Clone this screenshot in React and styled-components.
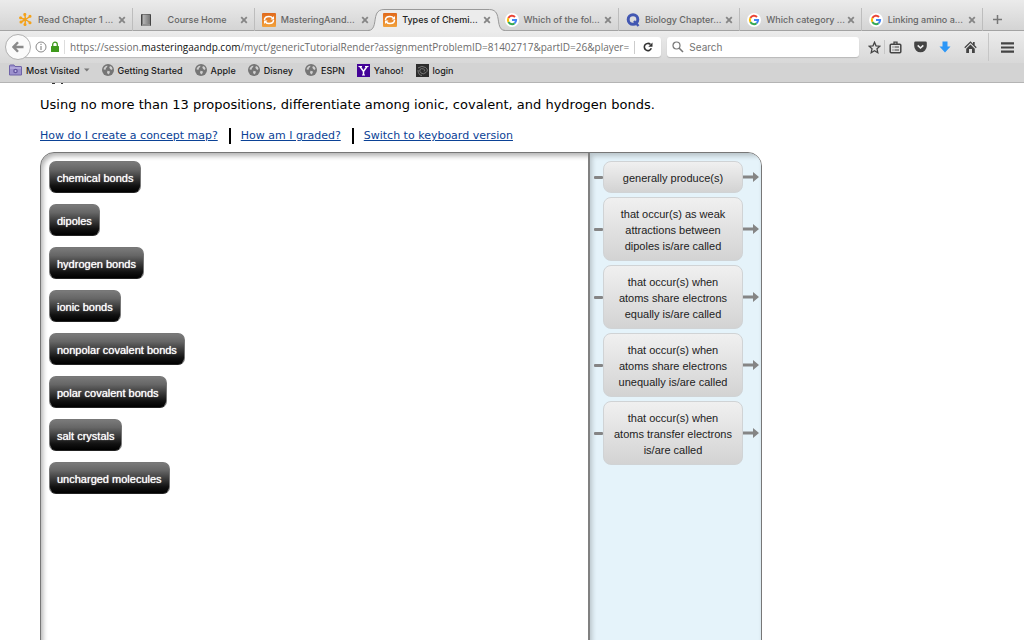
import styled, { createGlobalStyle, css } from 'styled-components';

const GlobalStyle = createGlobalStyle`
  * {
    box-sizing: border-box;
  }
  body {
    margin: 0;
    background: #fff;
    color: #000;
    font-family: 'DejaVu Sans', sans-serif;
  }
  button, input {
    font: inherit;
    color: inherit;
    border: 0;
    padding: 0;
    background: none;
  }
  svg {
    display: block;
    flex: none;
  }
`;

const Window = styled.div`
  display: flex;
  flex-direction: column;
  height: 100vh;
  overflow: hidden;
`;

const Chrome = styled.header`
  flex: none;
  font-family: Inter, sans-serif;
  font-size: 9px;
  font-weight: 500;
  border-bottom: 1px solid #b4b4b4;
`;

const TabStrip = styled.nav`
  display: flex;
  height: 31px;
  padding: 8px 0 0 12px;
  background: linear-gradient(#ebebeb, #d4d4d4);
  border-bottom: 1px solid #a3a3a3;
`;

const TabItem = styled.div`
  position: relative;
  display: flex;
  flex: 1;
  align-items: center;
  gap: 5px;
  min-width: 0;
  height: 23px;
  padding: 0 7px;
  color: #666;

  ${(p) =>
    p.$divider &&
    css`
      box-shadow: inset -1px 0 #bdbdbd;
    `}
  ${(p) =>
    p.$active &&
    css`
      color: #222;
      z-index: 1;
    `}
`;

const TabShape = styled.svg`
  position: absolute;
  left: -8px;
  top: 0;
  width: calc(100% + 16px);
  height: 24px;
`;

const TabLabel = styled.button`
  position: relative;
  flex: 1;
  min-width: 0;
  white-space: nowrap;
  text-align: ${(p) => (p.$centered ? 'center' : 'left')};
`;

const TabIcon = styled.span`
  position: relative;
  width: 14px;
`;

const CloseButton = styled.button`
  position: relative;
  width: 8px;
  height: 8px;
`;

const NewTab = styled.button`
  display: grid;
  place-items: center;
  width: 41px;
  padding-right: 12px;
  height: 23px;
`;

const Toolbar = styled.div`
  display: flex;
  align-items: center;
  height: 32px;
  padding: 0 10px 0 5px;
  background: linear-gradient(#ececec, #d8d8d8);
`;

const BackButton = styled.button`
  position: relative;
  z-index: 1;
  display: grid;
  place-items: center;
  width: 26px;
  height: 26px;
  margin-right: -6px;
  border: 1px solid #b0b0b0;
  border-radius: 50%;
  background: #fafafa;
`;

const AddressBar = styled.div`
  display: flex;
  flex: 1;
  align-items: center;
  min-width: 0;
  height: 20px;
  margin-right: 6px;
  padding-left: 10px;
  border-radius: 0 3px 3px 0;
  background: #fff;
  box-shadow: 0 1px 1px #b9b9b9;
  font-family: 'Open Sans', sans-serif;
  font-size: 10px;
  font-weight: 400;
`;

const Address = styled.div`
  flex: 1;
  min-width: 0;
  margin-left: 5px;
  padding-left: 5px;
  border-left: 1px solid #ddd;
  white-space: nowrap;
  color: #6c6c6c;

  b {
    color: #111;
    font-weight: 500;
  }
`;

const Reload = styled.button`
  display: grid;
  place-items: center;
  width: 27px;
  height: 13px;
  border-left: 1px solid #ccc;
`;

const SearchBox = styled.label`
  display: flex;
  align-items: center;
  gap: 5px;
  width: 19%;
  height: 20px;
  padding: 0 5px;
  border-radius: 3px;
  background: #fff;
  box-shadow: 0 1px 1px #b9b9b9;

  input {
    min-width: 0;
    flex: 1;
    font-size: 10px;
    font-weight: 400;
    outline: 0;
  }
  input::placeholder {
    color: #737373;
    opacity: 1;
  }
`;

const Tools = styled.div`
  display: flex;
  align-items: center;
  gap: 11px;
  padding-left: 8px;
`;

const ToolButton = styled.button`
  display: grid;
  place-items: center;
  width: 14px;
  height: 16px;
`;

const Rule = styled.span`
  width: 1px;
  height: ${(p) => (p.$tall ? 28 : 14)}px;
  margin: 0 ${(p) => (p.$tall ? 0 : -8)}px;
  background: #c6c6c6;
`;

const Bookmarks = styled.nav`
  display: flex;
  align-items: center;
  gap: 12px;
  height: 19px;
  padding: 0 9px 5px;
  background: #d3d3d3;
`;

const Bookmark = styled.a`
  display: flex;
  align-items: center;
  gap: 4px;
  color: #1a1a1a;
  text-decoration: none;
  white-space: nowrap;
`;

const Page = styled.main`
  flex: 1;
  min-height: 0;
  overflow: hidden;
  padding: 0 40px;
`;

const Prompt = styled.p`
  margin: 12px 0 14px;
  font-size: 13px;
  line-height: 16px;
`;

const HelpLinks = styled.div`
  display: flex;
  align-items: center;
  height: 18px;
  margin-bottom: 7px;
  font-size: 11px;
  line-height: 16px;

  a {
    color: #0b4296;
  }
  a + a {
    margin-left: 11px;
    padding-left: 10px;
    border-left: 2px solid #000;
  }
`;

const Board = styled.section`
  display: flex;
  max-width: 722px;
  min-height: 600px;
  overflow: hidden;
  border: 1px solid #777;
  border-radius: 14px;
  background: #fff;
  box-shadow: inset 2px 3px 5px rgba(0, 0, 0, 0.3);
  font-family: 'Liberation Sans', sans-serif;
  font-size: 11px;
  line-height: 16px;
`;

const Terms = styled.div`
  display: flex;
  flex: 1;
  flex-direction: column;
  align-items: flex-start;
  gap: 11px;
  padding: 8px;
`;

const Term = styled.button`
  height: 32px;
  padding: 2px 7px 0;
  border: 1px solid #777;
  border-bottom-color: #222;
  border-radius: 7px;
  background: linear-gradient(#7a7a7a, #666 25%, #111 80%, #000);
  color: #fff;
  text-shadow: 0 0 1px #fff;
`;

const Phrases = styled.div`
  display: flex;
  flex-direction: column;
  gap: 4px;
  width: 173px;
  padding: 8px 2px 8px 4px;
  border-left: 2px solid #808080;
  background: #e5f3fa;
  box-shadow: inset 2px 3px 5px rgba(0, 0, 0, 0.2);
`;

const PhraseRow = styled.div`
  display: flex;
  align-items: center;
`;

const Phrase = styled.button`
  flex: 1;
  min-height: 32px;
  padding: 8px 9px 6px;
  border: 1px solid #d0d3d5;
  border-radius: 8px;
  background: linear-gradient(#f0f0f0, #d3d3d3);
  color: #222;
`;

const Stub = styled.span`
  width: 9px;
  height: 3px;
  border-radius: 1px;
  background: #858585;
`;

function Google() {
  return (
    <svg width="14" height="14" viewBox="0 0 14 14" fill="none" strokeWidth="2">
      <circle cx="7" cy="7" r="7" fill="#fff" />
      <path d="M3.4 5A4.1 4.1 0 0 1 10 4" stroke="#ea4335" />
      <path d="M3.4 5a4.1 4.1 0 0 0 0 4" stroke="#fbbc05" />
      <path d="M3.4 9a4.1 4.1 0 0 0 6.2 1.2" stroke="#34a853" />
      <path d="M7 7h4.1a4.1 4.1 0 0 1-1.5 3.2" stroke="#4285f4" />
    </svg>
  );
}

function Mastering() {
  return (
    <svg width="14" height="14" viewBox="0 0 14 14" fill="none">
      <defs>
        <linearGradient id="amber" x2="0" y2="1">
          <stop stopColor="#e0691c" />
          <stop offset="1" stopColor="#f2a23c" />
        </linearGradient>
      </defs>
      <rect width="14" height="14" rx="1" fill="url(#amber)" />
      <path d="M2.500 7Q2.500 3.500 7 3.500q2.500 0 3.500 1.500M11.500 7Q11.500 10.500 7 10.500q-2.500 0-3.500-1.500" stroke="#fff" strokeWidth="1.500" />
      <path d="M12 3v3.500H8.500zM2 11V7.500h3.500z" fill="#fff" />
    </svg>
  );
}

function Chegg() {
  return (
    <svg width="13" height="13" viewBox="0 0 13 13" stroke="#f3a21b" strokeWidth="1.500" fill="#f3a21b">
      <path d="M6.500 6.500 5.800 1.500M6.500 6.500l4.500-3M6.500 6.500 11 9.500M6.500 6.500 6 11.500M6.500 6.500 2 9M6.500 6.500l-5-1.500" />
      <circle cx="5.800" cy="1.500" r=".8" />
      <circle cx="11" cy="3.300" r=".8" />
      <circle cx="11" cy="9.700" r=".8" />
      <circle cx="6" cy="11.500" r=".8" />
      <circle cx="2" cy="9" r=".8" />
      <circle cx="1.600" cy="4.800" r=".8" />
    </svg>
  );
}

function Book() {
  return (
    <svg width="12" height="14" viewBox="0 0 12 14">
      <defs>
        <linearGradient id="cover">
          <stop stopColor="#bbb" />
          <stop offset="1" stopColor="#777" />
        </linearGradient>
      </defs>
      <rect x="1" y="1" width="10" height="12" rx="1" fill="#444" />
      <rect x="2.500" y="1.500" width="7.500" height="9.500" fill="url(#cover)" />
      <path d="M2 12h8" stroke="#ddd" />
    </svg>
  );
}

function Quizlet() {
  return (
    <svg width="14" height="14" viewBox="0 0 14 14" fill="none" stroke="#4257b2">
      <circle cx="7" cy="6.500" r="4.800" strokeWidth="3" />
      <path d="m8 8 4.500 5" strokeWidth="2.500" />
    </svg>
  );
}

function Globe() {
  return (
    <svg width="12" height="12" viewBox="0 0 12 12">
      <circle cx="6" cy="6" r="6" fill="#757575" />
      <path d="M2 3.800 3.800 2 5.500 1.800 5 3.200 3.800 4 4 5.200 2.800 5.800 1.500 5.200zM8 2l1.800 1 .8 2L9.300 6 8 4.800 7.300 3.500zM5.500 6.800l2.500.8-.5 1.600L6.300 10.500 5 8.800z" fill="#cfcfcf" />
    </svg>
  );
}

function Folder() {
  return (
    <svg width="13" height="12" viewBox="0 0 13 12">
      <path d="M.5 2q0-1 1-1H5l1 1.500h6q.5 0 .5.5v8H.5z" fill="#9c91cd" stroke="#6f63a8" />
      <path d="M1 4h11" stroke="#c5bde8" />
      <circle cx="6.500" cy="7" r="2.300" fill="#6456a0" />
      <circle cx="6.500" cy="7" r="1" fill="#c5bde8" />
    </svg>
  );
}

function Yahoo() {
  return (
    <svg width="13" height="13" viewBox="0 0 13 13" fill="none" stroke="#fff">
      <rect width="13" height="13" fill="#430297" stroke="none" />
      <path d="m3 2.500 3.500 5 3.500-5M6.500 7v4" strokeWidth="1.500" />
      <path d="M1.500 2.500h3.500M8 2.500h3.500M5 11h3" />
    </svg>
  );
}

function Spiral() {
  return (
    <svg width="13" height="13" viewBox="0 0 13 13" fill="none" stroke="#8a8a8a">
      <rect width="13" height="13" fill="#2c2c2c" stroke="none" />
      <path d="M2 4q4-3 7.500-.5t.5 5-5 .5-1-3.500 3.500-.5.5 2.500M2 6q0 5 4 5.500" strokeWidth=".8" />
    </svg>
  );
}

function Arrow() {
  return (
    <svg width="16" height="12" viewBox="0 0 16 12" fill="#858585">
      <path d="M0 4.500h10V1l6 5-6 5V7.500H0z" />
    </svg>
  );
}

// lower tips of the line that is scrolled under the toolbar
function ScrolledLine() {
  return (
    <svg width="30" height="2" viewBox="0 0 30 2" fill="#333" aria-hidden="true">
      <rect x="12" width="3" height="1" />
      <rect x="21" width="2" height="1" />
    </svg>
  );
}

const tabs = [
  { title: 'Read Chapter 1 ...', icon: Chegg, divider: true },
  { title: 'Course Home', icon: Book, divider: true, centered: true },
  { title: 'MasteringAand...', icon: Mastering },
  { title: 'Types of Chemi...', icon: Mastering, active: true },
  { title: 'Which of the fol...', icon: Google, divider: true },
  { title: 'Biology Chapter...', icon: Quizlet, divider: true },
  { title: 'Which category ...', icon: Google, divider: true },
  { title: 'Linking amino a...', icon: Google, divider: true },
];

const bookmarks = [
  { title: 'Most Visited', icon: Folder, menu: true },
  { title: 'Getting Started', icon: Globe },
  { title: 'Apple', icon: Globe },
  { title: 'Disney', icon: Globe },
  { title: 'ESPN', icon: Globe },
  { title: 'Yahoo!', icon: Yahoo },
  { title: 'login', icon: Spiral },
];

const terms = [
  'chemical bonds',
  'dipoles',
  'hydrogen bonds',
  'ionic bonds',
  'nonpolar covalent bonds',
  'polar covalent bonds',
  'salt crystals',
  'uncharged molecules',
];

const phrases = [
  'generally produce(s)',
  'that occur(s) as weak attractions between dipoles is/are called',
  'that occur(s) when atoms share electrons equally is/are called',
  'that occur(s) when atoms share electrons unequally is/are called',
  'that occur(s) when atoms transfer electrons is/are called',
];

function Tab({ title, icon: Icon, divider, centered, active }) {
  return (
    <TabItem $divider={divider} $active={active}>
      {active && (
        <TabShape viewBox="0 0 138 24" preserveAspectRatio="none">
          <path
            d="M0 22.500C8 22.500 6 12 8.500 6Q10.500 1.500 16 1.500H122Q127.500 1.500 129.500 6C132 12 130 22.500 138 22.500V24H0Z"
            fill="#ececec"
          />
          <path
            d="M0 22.500C8 22.500 6 12 8.500 6Q10.500 1.500 16 1.500H122Q127.500 1.500 129.500 6C132 12 130 22.500 138 22.500"
            fill="none"
            stroke="#999"
          />
        </TabShape>
      )}
      <TabIcon>
        <Icon />
      </TabIcon>
      <TabLabel $centered={centered}>{title}</TabLabel>
      <CloseButton aria-label="Close tab">
        <svg width="8" height="8" viewBox="0 0 8 8" stroke="#858585" strokeWidth="1.800">
          <path d="m1.200 1.200 5.600 5.600M6.800 1.200 1.200 6.800" />
        </svg>
      </CloseButton>
    </TabItem>
  );
}

function BrowserChrome() {
  return (
    <Chrome>
      <TabStrip>
        {tabs.map((tab) => (
          <Tab key={tab.title} {...tab} />
        ))}
        <NewTab aria-label="New tab">
          <svg width="9" height="9" viewBox="0 0 9 9" stroke="#777" strokeWidth="1.500">
            <path d="M4.500 0v9M0 4.500h9" />
          </svg>
        </NewTab>
      </TabStrip>
      <Toolbar>
        <BackButton aria-label="Back">
          <svg width="12" height="12" viewBox="0 0 12 12" fill="none" stroke="#8a8a8a" strokeWidth="2.400">
            <path d="M6 1.200 1.500 6 6 10.800M1.500 6h10" />
          </svg>
        </BackButton>
        <AddressBar>
          <svg width="24" height="12" viewBox="0 0 24 12" fill="none">
            <circle cx="6" cy="6" r="5" stroke="#888" />
            <path d="M6 5v4M6 2.800v1.200" stroke="#777" />
            <rect x="16" y="5" width="8" height="6" rx=".5" fill="#3f9a1c" />
            <path d="M17.700 5.500v-2a2.300 2.300 0 0 1 4.600 0v2" stroke="#3f9a1c" strokeWidth="1.300" />
          </svg>
          <Address>
            https://session.<b>masteringaandp.com</b>
            /myct/genericTutorialRender?assignmentProblemID=81402717&amp;partID=26&amp;player=
          </Address>
          <Reload aria-label="Reload">
            <svg width="10" height="10" viewBox="0 0 10 10" fill="none" stroke="#333" strokeWidth="1.600">
              <path d="M8.300 6.300A3.600 3.600 0 1 1 7.500 2.500" />
              <path d="M9.500.5v4.300H5.300z" fill="#333" stroke="none" />
            </svg>
          </Reload>
        </AddressBar>
        <SearchBox>
          <svg width="12" height="12" viewBox="0 0 12 12" fill="none" stroke="#777">
            <circle cx="4.500" cy="4.500" r="3.500" strokeWidth="1.200" />
            <path d="m7 7 4 4" strokeWidth="1.600" />
          </svg>
          <input aria-label="Search" placeholder="Search" />
        </SearchBox>
        <Tools>
          <ToolButton aria-label="Bookmark this page">
            <svg width="13" height="13" viewBox="0 0 13 13" fill="none" stroke="#444" strokeWidth="1.300">
              <path d="m6.500 1.300 1.500 3.500 3.900.4-2.900 2.600.8 3.900-3.300-2-3.300 2 .8-3.900-2.900-2.600 3.900-.4z" />
            </svg>
          </ToolButton>
          <Rule />
          <ToolButton aria-label="Bookmarks list">
            <svg width="13" height="13" viewBox="0 0 13 13" fill="none" stroke="#444">
              <rect x="1.200" y="3.200" width="10.600" height="8.600" rx="1" strokeWidth="1.500" />
              <path d="M5 3V1.200h3V3" strokeWidth="1.300" />
              <path d="M3.500 6h1M5.500 6h4.500M3.500 9h1M5.500 9h4.500" strokeWidth="1.200" />
            </svg>
          </ToolButton>
          <ToolButton aria-label="Pocket">
            <svg width="13" height="12" viewBox="0 0 13 12">
              <path d="M1.500.5h10q1.300 0 1.300 1.300V5a6.300 6.300 0 0 1-12.600 0V1.800Q.2.5 1.500.5z" fill="#444" />
              <path d="m3.700 4.300 2.800 2.700 2.800-2.700" fill="none" stroke="#eee" strokeWidth="1.600" />
            </svg>
          </ToolButton>
          <ToolButton aria-label="Downloads">
            <svg width="12" height="12" viewBox="0 0 12 12" fill="#2c97f7">
              <path d="M3.500.5h5v5h3L6 11.500.5 5.500h3z" />
            </svg>
          </ToolButton>
          <ToolButton aria-label="Home">
            <svg width="13" height="12" viewBox="0 0 13 12" fill="#444">
              <path d="m6.500.3 2.500 2.500V1h1.700v3.300l2 2-.9.9-5.300-5.200-5.300 5.200-.9-.9z" />
              <path d="m6.500 3.500 4.300 4.200V12H8V8H5v4H2.200V7.700z" />
            </svg>
          </ToolButton>
          <Rule $tall />
          <ToolButton aria-label="Menu">
            <svg width="13" height="11" viewBox="0 0 13 11" stroke="#444" strokeWidth="2.200">
              <path d="M0 1.300h13M0 5.500h13M0 9.700h13" />
            </svg>
          </ToolButton>
        </Tools>
      </Toolbar>
      <Bookmarks>
        {bookmarks.map(({ title, icon: Icon, menu }) => (
          <Bookmark key={title} href="#">
            <Icon />
            {title}
            {menu && (
              <svg width="6" height="4" viewBox="0 0 6 4" fill="#777">
                <path d="M0 .5h5.500L2.800 3.500z" />
              </svg>
            )}
          </Bookmark>
        ))}
      </Bookmarks>
    </Chrome>
  );
}

function App() {
  return (
    <Window>
      <GlobalStyle />
      <BrowserChrome />
      <Page>
        <ScrolledLine />
        <Prompt>
          Using no more than 13 propositions, differentiate among ionic,
          covalent, and hydrogen bonds.
        </Prompt>
        <HelpLinks>
          <a href="#map">How do I create a concept map?</a>
          <a href="#grading">How am I graded?</a>
          <a href="#keyboard">Switch to keyboard version</a>
        </HelpLinks>
        <Board>
          <Terms>
            {terms.map((term) => (
              <Term key={term}>{term}</Term>
            ))}
          </Terms>
          <Phrases>
            {phrases.map((phrase) => (
              <PhraseRow key={phrase}>
                <Stub />
                <Phrase>{phrase}</Phrase>
                <Arrow />
              </PhraseRow>
            ))}
          </Phrases>
        </Board>
      </Page>
    </Window>
  );
}

export default App;
